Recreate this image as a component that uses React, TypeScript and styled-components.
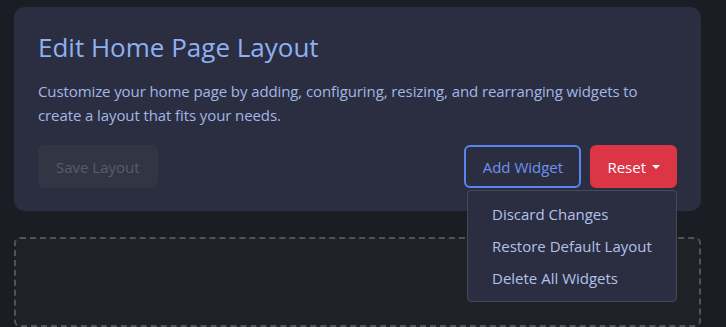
import React from "react";
import styled, { createGlobalStyle } from "styled-components";

const Global = createGlobalStyle`
  html, body { margin: 0; padding: 0; background: #1b1d24; }
  body { font-family: "Open Sans", "Noto Sans", sans-serif; }
  * { box-sizing: border-box; }
`;

const Page = styled.div`
  padding: 7px 25px 0 14px;
  display: flex;
  flex-direction: column;
  gap: 26px;
  height: 327px;
  overflow: hidden;
`;

const Card = styled.section`
  background: #2a2e40;
  border-radius: 11px;
  padding: 22px 24px 23px 24px;
  display: flex;
  flex-direction: column;
`;

const Title = styled.h1`
  margin: 0;
  font-size: 26px;
  font-weight: 400;
  line-height: 36px;
  color: #8fb0f3;
`;

const Description = styled.p`
  margin: 14px 0 18px;
  font-size: 15px;
  line-height: 24px;
  letter-spacing: -0.1px;
  color: #a3b6e6;
`;

const Actions = styled.div`
  display: flex;
  align-items: center;
  gap: 9px;
`;

const Spacer = styled.div`
  flex: 1;
`;

const Button = styled.button<{ $variant: "disabled" | "outline" | "danger" }>`
  height: 43px;
  padding: 0 ${({ $variant }) => ($variant === "danger" ? "15px" : "16px")};
  border-radius: 6px;
  font-family: inherit;
  font-size: 15px;
  line-height: 20px;
  display: inline-flex;
  align-items: center;
  gap: 6px;
  cursor: pointer;
  border: 2px solid transparent;
  ${({ $variant }) =>
    $variant === "disabled"
      ? `background:#313544; color:#585d6e; border-color:#313544; cursor:default;`
      : $variant === "outline"
      ? `background:transparent; color:#6f92f2; border-color:#5b84ee; min-width:117px; justify-content:center;`
      : `background:#dc3545; color:#ffffff; border-color:#dc3545;`}
`;

const Caret = styled.span`
  width: 0;
  height: 0;
  border-left: 4px solid transparent;
  border-right: 4px solid transparent;
  border-top: 4px solid currentColor;
`;

const ResetWrap = styled.div`
  position: relative;
`;

const Menu = styled.ul`
  position: absolute;
  top: 45px;
  right: 0;
  width: 210px;
  margin: 0;
  padding: 7px 0;
  list-style: none;
  background: #2a2e40;
  border: 1px solid #464a58;
  border-radius: 4px;
  z-index: 10;
`;

const MenuItem = styled.li`
  padding: 0 24px;
  height: 32px;
  line-height: 32px;
  font-size: 15px;
  color: #b3c1e8;
  white-space: nowrap;
`;

const DropZone = styled.div`
  height: 120px;
  border: 2px dashed #505359;
  border-radius: 6px;
  background: #1f2126;
`;

export default function App() {
  return (
    <>
      <Global />
      <Page>
        <Card>
          <Title>Edit Home Page Layout</Title>
          <Description>
            Customize your home page by adding, configuring, resizing, and rearranging widgets to
            create a layout that fits your needs.
          </Description>
          <Actions>
            <Button $variant="disabled" disabled>
              Save Layout
            </Button>
            <Spacer />
            <Button $variant="outline">Add Widget</Button>
            <ResetWrap>
              <Button $variant="danger">
                Reset <Caret />
              </Button>
              <Menu>
                <MenuItem>Discard Changes</MenuItem>
                <MenuItem>Restore Default Layout</MenuItem>
                <MenuItem>Delete All Widgets</MenuItem>
              </Menu>
            </ResetWrap>
          </Actions>
        </Card>
        <DropZone />
      </Page>
    </>
  );
}
